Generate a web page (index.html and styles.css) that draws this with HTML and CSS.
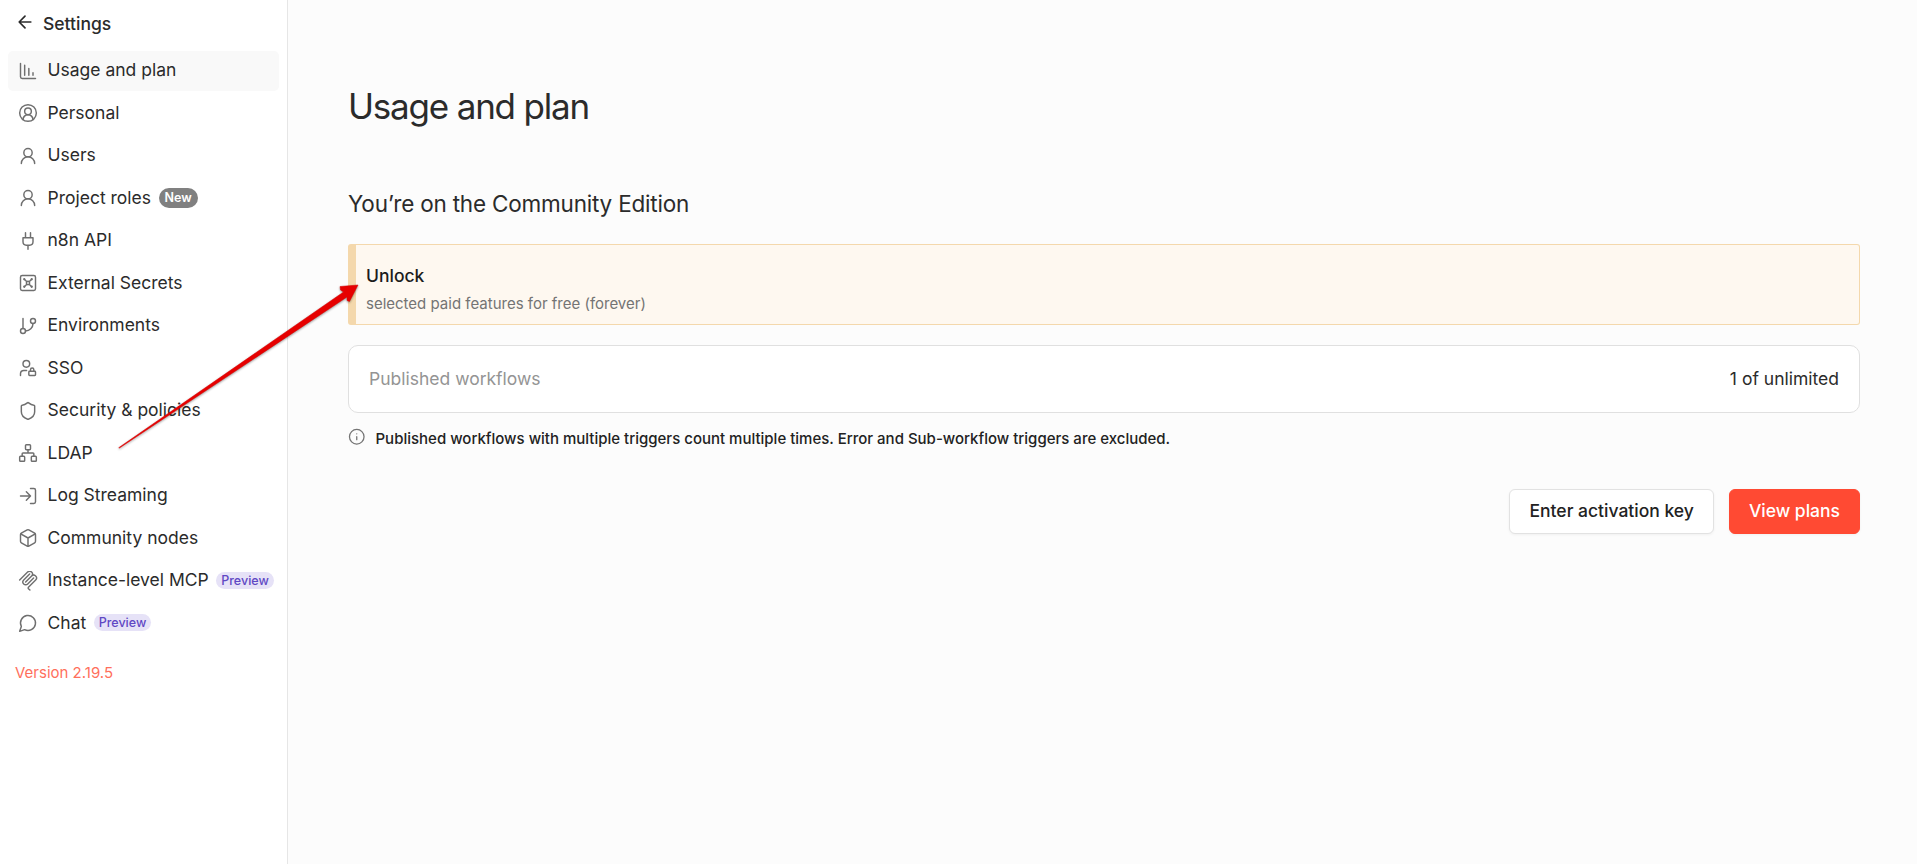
FILE: index.html
```html
<!DOCTYPE html>
<html lang="en">
<head>
  <meta charset="UTF-8" />
  <meta name="viewport" content="width=device-width, initial-scale=1" />
  <title>Usage and plan - n8n</title>
  <link rel="stylesheet" href="styles.css">
</head>
<body>
  <aside class="sidebar">
    <a class="back">
      <svg class="back-icon" viewBox="0 0 24 24"><path d="m12 19-7-7 7-7M19 12H5" /></svg>
      <span>Settings</span>
    </a>
    <nav class="menu">
      <a class="item active">
        <svg class="icon" viewBox="0 0 24 24"><path d="M13 17V9M18 17v-3M3 3v16a2 2 0 0 0 2 2h16M8 17V5" /></svg>
        <span>Usage and plan</span>
      </a>
      <a class="item">
        <svg class="icon" viewBox="0 0 24 24"><path d="M18 20a6 6 0 0 0-12 0" /><circle cx="12" cy="10" r="4" /><circle cx="12" cy="12" r="10" /></svg>
        <span>Personal</span>
      </a>
      <a class="item">
        <svg class="icon" viewBox="0 0 24 24"><circle cx="12" cy="8" r="5" /><path d="M20 21a8 8 0 0 0-16 0" /></svg>
        <span>Users</span>
      </a>
      <a class="item">
        <svg class="icon" viewBox="0 0 24 24"><circle cx="12" cy="8" r="5" /><path d="M20 21a8 8 0 0 0-16 0" /></svg>
        <span>Project roles</span>
        <span class="tag new">New</span>
      </a>
      <a class="item">
        <svg class="icon" viewBox="0 0 24 24"><path d="M12 22v-5M9 8V2M15 8V2M18 8v5a4 4 0 0 1-4 4h-4a4 4 0 0 1-4-4V8Z" /></svg>
        <span>n8n API</span>
      </a>
      <a class="item">
        <svg class="icon" viewBox="0 0 24 24"><rect x="3" y="3" width="18" height="18" rx="2" /><circle cx="7.5" cy="7.5" r=".5" /><circle cx="16.5" cy="7.5" r=".5" /><circle cx="7.5" cy="16.5" r=".5" /><circle cx="16.5" cy="16.5" r=".5" /><path d="m7.9 7.9 2.7 2.7M13.4 10.6l2.7-2.7M7.9 16.1l2.7-2.7M13.4 13.4l2.7 2.7" /><circle cx="12" cy="12" r="2" /></svg>
        <span>External Secrets</span>
      </a>
      <a class="item">
        <svg class="icon" viewBox="0 0 24 24"><path d="M6 3v12M18 9a9 9 0 0 1-9 9" /><circle cx="18" cy="6" r="3" /><circle cx="6" cy="18" r="3" /></svg>
        <span>Environments</span>
      </a>
      <a class="item">
        <svg class="icon" viewBox="0 0 24 24"><circle cx="10" cy="7" r="4" /><path d="M10.3 15H7a4 4 0 0 0-4 4v2M15 15.5V14a2 2 0 0 1 4 0v1.5" /><rect x="13" y="16" width="8" height="5" rx=".9" /></svg>
        <span>SSO</span>
      </a>
      <a class="item">
        <svg class="icon" viewBox="0 0 24 24"><path d="M20 13c0 5-3.500 7.500-7.660 8.950a1 1 0 0 1-.67-.01C7.500 20.500 4 18 4 13V6a1 1 0 0 1 1-1c2 0 4.500-1.200 6.240-2.720a1.170 1.170 0 0 1 1.520 0C14.510 3.810 17 5 19 5a1 1 0 0 1 1 1z" /></svg>
        <span>Security &amp; policies</span>
      </a>
      <a class="item">
        <svg class="icon" viewBox="0 0 24 24"><rect x="16" y="16" width="6" height="6" rx="1" /><rect x="2" y="16" width="6" height="6" rx="1" /><rect x="9" y="2" width="6" height="6" rx="1" /><path d="M5 16v-3a1 1 0 0 1 1-1h12a1 1 0 0 1 1 1v3M12 12V8" /></svg>
        <span>LDAP</span>
      </a>
      <a class="item">
        <svg class="icon" viewBox="0 0 24 24"><path d="m10 17 5-5-5-5M15 12H3M15 3h4a2 2 0 0 1 2 2v14a2 2 0 0 1-2 2h-4" /></svg>
        <span>Log Streaming</span>
      </a>
      <a class="item">
        <svg class="icon" viewBox="0 0 24 24"><path d="M21 8a2 2 0 0 0-1-1.730l-7-4a2 2 0 0 0-2 0l-7 4A2 2 0 0 0 3 8v8a2 2 0 0 0 1 1.730l7 4a2 2 0 0 0 2 0l7-4A2 2 0 0 0 21 16ZM3.300 7l8.700 5 8.700-5M12 22V12" /></svg>
        <span>Community nodes</span>
      </a>
      <a class="item">
        <svg class="icon mcp" viewBox="4 8 170 170"><path d="M18 84.850 85.880 16.970c9.370-9.370 24.570-9.370 33.940 0s9.370 24.570 0 33.940L68.560 102.180M69.270 101.470l50.550-50.560c9.370-9.370 24.570-9.370 33.940 0l.36.360c9.370 9.370 9.370 24.570 0 33.940L92.720 146.600c-3.120 3.120-3.120 8.190 0 11.310l12.610 12.610M102.850 33.940 52.650 84.150c-9.370 9.370-9.370 24.560 0 33.940s24.570 9.370 33.940 0l50.200-50.210" /></svg>
        <span>Instance-level MCP</span>
        <span class="tag preview">Preview</span>
      </a>
      <a class="item">
        <svg class="icon" viewBox="0 0 24 24"><path d="M7.900 20A9 9 0 1 0 4 16.100L2 22Z" /></svg>
        <span>Chat</span>
        <span class="tag preview">Preview</span>
      </a>
    </nav>
    <a class="version">Version 2.19.5</a>
  </aside>

  <main class="content">
    <h1>Usage and plan</h1>
    <h2>You’re on the Community Edition</h2>

    <div class="notice">
      <strong>Unlock</strong>
      <span>selected paid features for free (forever)</span>
    </div>

    <div class="quota">
      <span class="quota-label">Published workflows</span>
      <span>1 of unlimited</span>
    </div>

    <div class="info">
      <svg class="info-icon" viewBox="0 0 24 24"><circle cx="12" cy="12" r="10" /><path d="M12 16v-4M12 8h.01" /></svg>
      <span>Published workflows with multiple triggers count multiple times. Error and Sub-workflow triggers are excluded.</span>
    </div>

    <div class="buttons">
      <button class="btn">Enter activation key</button>
      <button class="btn primary">View plans</button>
    </div>
  </main>

  <svg class="arrow" viewBox="0 0 242 168">
    <path d="M1 164.500 225.500 9 222.500 7 222 3.500 240 2 231.500 18.500 229 17.500 229 14 1.500 165Z" />
  </svg>
</body>
</html>
```

FILE: styles.css
```css
* {
  box-sizing: border-box;
  margin: 0;
  padding: 0;
}
body {
  font-family: Inter, sans-serif;
  font-size: 17.5px;
  display: flex;
  height: 100vh;
  background: #fcfcfc;
  color: #2b2b2b;
  overflow: hidden;
}
svg {
  fill: none;
  stroke: currentColor;
  stroke-width: 1.75;
  stroke-linecap: round;
  stroke-linejoin: round;
  flex-shrink: 0;
}
.sidebar {
  width: 288px;
  background: #fff;
  border-right: 1px solid #e6e6e6;
  flex-shrink: 0;
}
.back {
  display: flex;
  align-items: center;
  gap: 8px;
  height: 51px;
  padding: 0 0 4px 15px;
  font-weight: 500;
}
.back-icon {
  width: 20px;
  height: 20px;
  margin-top: -4px;
  stroke-width: 2;
}
.menu {
  display: flex;
  flex-direction: column;
  gap: 2.5px;
  padding: 0 8px;
}
.item {
  display: flex;
  align-items: center;
  height: 40px;
  padding: 0 0 3px 10px;
  border-radius: 5px;
  white-space: nowrap;
}
.item.active {
  background: #f9f9f9;
}
.icon {
  width: 20px;
  height: 20px;
  margin: 2px 9.5px 0 0;
  color: #6f6f6f;
}
.icon.mcp {
  stroke-width: 12;
}
.tag {
  margin: 1px 0 0 7.5px;
  padding: 0 5px;
  border-radius: 20px;
  font-size: 12.5px;
}
.tag.new {
  background: #808080;
  color: #fff;
  font-weight: 600;
  line-height: 20px;
  padding: 0 6px;
}
.tag.preview {
  background: #e6e2f7;
  color: #5f48c4;
  font-weight: 500;
  line-height: 17px;
}
.version {
  display: block;
  padding: 19px 15px;
  font-size: 15px;
  color: #ff6f5c;
}
.content {
  flex: 1;
  padding: 83px 57px 0 60px;
}
h1 {
  font-size: 35px;
  font-weight: 400;
  line-height: 46px;
  letter-spacing: -1.2px;
}
h2 {
  margin-top: 60px;
  font-size: 22.5px;
  font-weight: 400;
  line-height: 30px;
  letter-spacing: -0.2px;
}
.notice {
  display: flex;
  flex-direction: column;
  height: 81px;
  margin-top: 25px;
  padding: 20px 10px;
  background: #fef8f0;
  border: 1px solid #f4d8ac;
  border-left-width: 8px;
  border-radius: 3px;
}
.notice strong {
  font-weight: 500;
  line-height: 22px;
  color: #1c1c1c;
}
.notice span {
  margin-top: 7px;
  font-size: 15px;
  line-height: 20px;
  color: #747474;
}
.quota {
  display: flex;
  justify-content: space-between;
  align-items: center;
  height: 68px;
  margin-top: 20px;
  padding: 0 20px 2px;
  background: #fff;
  border: 1px solid #e0e0e0;
  border-radius: 10px;
}
.quota-label {
  color: #949494;
}
.info {
  display: flex;
  gap: 10px;
  margin-top: 15px;
  font-size: 15px;
  font-weight: 500;
  line-height: 22px;
  color: #222;
}
.info-icon {
  width: 17.5px;
  height: 17.5px;
  color: #747474;
}
.buttons {
  display: flex;
  justify-content: flex-end;
  gap: 15px;
  margin-top: 39px;
}
.btn {
  height: 45px;
  padding: 0 19px 2px;
  font: 500 17.5px Inter, sans-serif;
  color: #222;
  background: #fff;
  border: 1px solid #e2e2e2;
  border-radius: 6px;
  box-shadow: 0 1px 3px rgba(0, 0, 0, 0.05);
}
.btn.primary {
  background: #ff4a33;
  border-color: #ff4a33;
  color: #fff;
}
/* pointer drawn over the sidebar, ends at the notice */
.arrow {
  position: absolute;
  left: 118px;
  top: 283px;
  width: 242px;
  height: 168px;
  filter: drop-shadow(0 1px 1px rgba(0, 0, 0, 0.4));
}
.arrow path {
  fill: #e60000;
  stroke: #d80000;
  stroke-width: 0.5;
}
```
